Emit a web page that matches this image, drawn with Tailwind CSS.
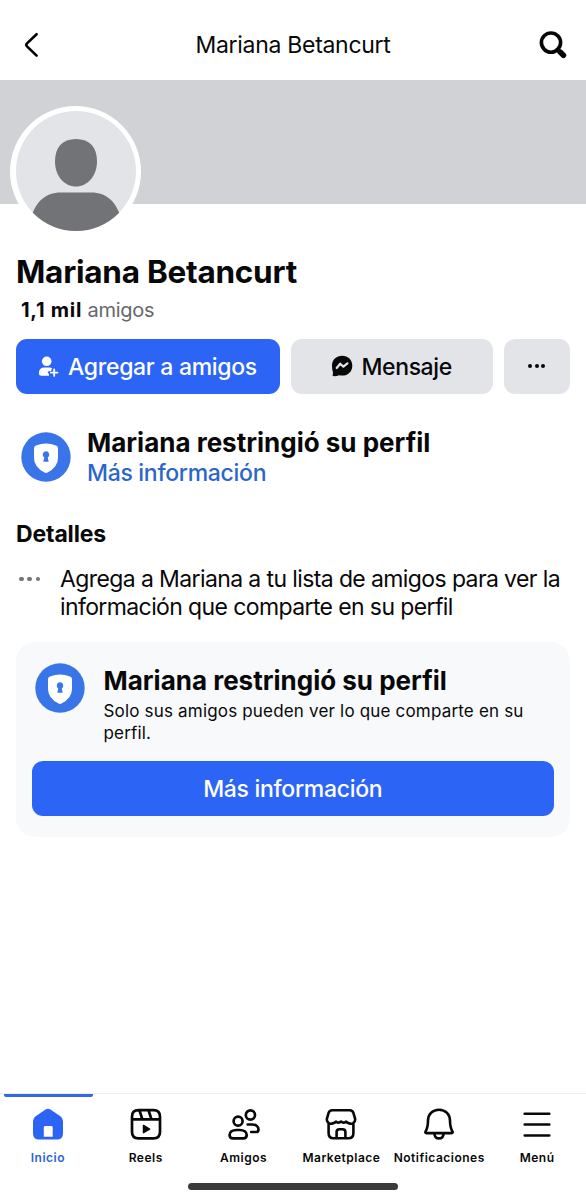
<!DOCTYPE html>
<html lang="es">
<head>
    <meta charset="UTF-8">
    <meta name="viewport" content="width=device-width, initial-scale=1.0">
    <title>Mariana Betancurt</title>
    <script src="https://cdn.jsdelivr.net/npm/@tailwindcss/browser@4"></script>
    <style>
        body { font-family: 'Inter', 'Liberation Sans', sans-serif; }
    </style>
</head>
<body class="bg-white text-[#080809] w-[586px] h-[1200px] flex flex-col overflow-hidden whitespace-nowrap">
    <!-- Header -->
    <header class="h-20 shrink-0 pt-[9px] flex items-center justify-between">
        <button class="w-[60px] pl-[22px]">
            <svg class="w-5 h-7" viewBox="0 0 20 28" fill="none" stroke="#000" stroke-width="2.6" stroke-linecap="round" stroke-linejoin="round"><path d="M14.6 3.2 5 12.4Q3.6 13.9 5 15.4L14.6 24.6"/></svg>
        </button>
        <h1 class="text-[23px] leading-7 tracking-[-0.3px]">Mariana Betancurt</h1>
        <button class="w-[60px] pl-[12px]">
            <svg class="w-8 h-8" viewBox="0 0 32 32" fill="none" stroke="#050505" stroke-linecap="round"><circle cx="13" cy="13.600" r="9.600" stroke-width="3.600"/><path d="m22.200 23.100 3.200 3.100" stroke-width="5.600"/><path d="m19.500 20.500 3 3" stroke-width="4"/></svg>
        </button>
    </header>

    <!-- Cover and avatar -->
    <div class="h-[124px] shrink-0 bg-[#d1d2d6] pt-[25.500px] pl-[10.400px]">
        <div class="w-[131px] h-[131px] rounded-full bg-white p-[5.500px]">
            <svg class="w-[120px] h-[120px]" viewBox="0 0 120 120">
                <clipPath id="avatar"><circle cx="60" cy="60" r="60"/></clipPath>
                <g clip-path="url(#avatar)">
                    <path fill="#e3e4e8" d="M0 0h120v120H0z"/>
                    <path fill="#727377" d="M60 28c14 0 21 8.500 21 22.500C81 65 71.500 75.500 60 75.500S39 65 39 50.500C39 36.500 46 28 60 28ZM45 81.500h30c16 0 26 10 30 26V120H15v-12.500c4-16 14-26 30-26Z"/>
                </g>
            </svg>
        </div>
    </div>

    <main class="flex-1 px-4 pt-[50px]">
        <h2 class="text-[31.500px] leading-9 font-bold tracking-[-0.250px]">Mariana Betancurt</h2>
        <p class="mt-[7px] ml-[5px] text-[20px] leading-[26px] tracking-[-0.300px] text-[#65686c]"><b class="font-bold tracking-[0.750px] text-[#080809]">1,1 mil</b> amigos</p>

        <div class="mt-4 flex gap-[11px] h-[54.500px] text-[23px] font-medium">
            <button class="w-[263.500px] rounded-[11px] bg-[#2c64f6] text-white flex items-center pl-[22px] gap-[9px]">
                <svg class="w-[21px] h-[22px]" viewBox="0 0 21 22" fill="#fff"><circle cx="8.700" cy="6.300" r="4.800"/><path d="M6.500 12.500h5.200q2.600 0 2.800 1.700h-1.200v2h-2.300q-1.200 0-1.200 1.200t1.200 1.200v2.200H3.300Q.9 20.800.9 18.400q0-5.900 5.600-5.900Z"/><path d="M16.200 14.300v6.600M12.900 17.600h6.600" stroke="#fff" stroke-width="1.800" stroke-linecap="round"/></svg>
                <span class="pt-[2px] tracking-[-0.300px]">Agregar a amigos</span>
            </button>
            <button class="w-[202.500px] rounded-[11px] bg-[#e3e4e8] flex items-center pl-[40px] gap-[9px]">
                <svg class="w-[22px] h-[22px]" viewBox="0 0 22 22"><path fill="#080809" d="M11.200.8C17.200.8 21.300 5 21.300 10.700S17.200 20.600 11.200 20.600q-1.700 0-3.200-.4-2.500 1.100-5.600.9-1.400-.2-.7-1.400.7-1.300.1-3Q1 14.300 1 10.700C1 5 5.200.8 11.200.8Z"/><path d="m5.700 13 3.500-4.300 3.200 2.900 4-3.300" fill="none" stroke="#e3e4e8" stroke-width="2.200" stroke-linecap="round" stroke-linejoin="round"/></svg>
                <span class="pt-[2px] tracking-[-0.400px]">Mensaje</span>
            </button>
            <button class="w-[65.500px] rounded-[11px] bg-[#e3e4e8] flex items-center justify-center gap-[2.800px]">
                <i class="size-[3.700px] rounded-full bg-[#080809]"></i>
                <i class="size-[3.700px] rounded-full bg-[#080809]"></i>
                <i class="size-[3.700px] rounded-full bg-[#080809]"></i>
            </button>
        </div>

        <!-- Locked profile notice -->
        <div class="mt-[34.500px] pl-[5px] flex gap-4">
            <svg class="mt-[4px] size-[50px]" viewBox="0 0 50 50"><circle cx="25" cy="25" r="24.700" fill="#3975e9"/><path fill="#fff" d="M15 13.500Q25 9.700 35 13.500q2 .6 2 2.500v10q0 9-10.500 14.600-1.500.8-3 0Q13 35 13 26V16q0-1.900 2-2.500Z"/><path fill="#3975e9" d="M25 19.300a3.300 3.300 0 0 1 1.700 6.100l1 4.400H22.300l1-4.400A3.300 3.300 0 0 1 25 19.300Z"/></svg>
            <div>
                <h3 class="text-[26px] leading-[30px] font-bold">Mariana restringió su perfil</h3>
                <a class="block text-[23px] leading-[30px] font-medium tracking-[-0.300px] text-[#2b66c9]">Más información</a>
            </div>
        </div>

        <h3 class="mt-8 text-[23px] leading-7 font-bold tracking-[-0.150px]">Detalles</h3>
        <div class="mt-[17px] flex">
            <div class="w-11 h-7 shrink-0 pl-[3px] flex items-center gap-[3.500px]">
                <i class="size-[4.800px] rounded-full bg-[#737478]"></i>
                <i class="size-[4.800px] rounded-full bg-[#737478]"></i>
                <i class="size-[4.800px] rounded-full bg-[#737478]"></i>
            </div>
            <p class="pt-px text-[23px] leading-[27.500px] tracking-[-0.610px]">Agrega a Mariana a tu lista de amigos para ver la<br>información que comparte en su perfil</p>
        </div>

        <!-- Locked profile card -->
        <section class="mt-[21px] h-[195px] w-[553.500px] rounded-[19px] bg-[#f7f9fb] p-4 pt-[21px]">
            <div class="pl-[2.500px] flex gap-[19px]">
                <svg class="size-[50px]" viewBox="0 0 50 50"><circle cx="25" cy="25" r="24.700" fill="#3975e9"/><path fill="#fff" d="M15 13.500Q25 9.700 35 13.500q2 .6 2 2.500v10q0 9-10.500 14.600-1.500.8-3 0Q13 35 13 26V16q0-1.900 2-2.500Z"/><path fill="#3975e9" d="M25 19.300a3.300 3.300 0 0 1 1.700 6.100l1 4.400H22.300l1-4.400A3.300 3.300 0 0 1 25 19.300Z"/></svg>
                <div class="pt-[3px]">
                    <h3 class="text-[26px] leading-[30px] font-bold">Mariana restringió su perfil</h3>
                    <p class="mt-[5px] text-[17px] leading-[21.500px] tracking-[0.180px]">Solo sus amigos pueden ver lo que comparte en su<br>perfil.</p>
                </div>
            </div>
            <button class="mt-[17px] pt-px w-full h-[54.500px] rounded-[11px] bg-[#2c64f6] text-white text-[23px] font-medium tracking-[-0.300px]">Más información</button>
        </section>
    </main>

    <!-- Bottom tabs -->
    <nav class="h-[107px] w-full shrink-0 border-t border-[#ececee] flex flex-col">
        <div class="w-[587px] -ml-px grid grid-cols-6 text-center text-[12px] leading-4 font-semibold tracking-[0.500px]">
            <a class="flex flex-col items-center text-[#2b63e0]">
                <span class="w-[89px] h-[3px] ml-[1.500px] rounded-b-[2px] bg-[#3566e3]"></span>
                <svg class="mt-[11px] size-8" viewBox="0 0 32 32"><path fill="#2c64f6" fill-rule="evenodd" d="M13.200 1.700q2.800-1.800 5.600 0l9.600 6.500Q31 10 31 13v12.500q0 6-6 6H7q-6 0-6-6V13q0-3 2.600-4.800Zm-.1 16.300q-1.300 0-1.300 1.300v9.400h8.900v-9.400q0-1.300-1.300-1.300Z"/></svg>
                <span class="mt-[10px]">Inicio</span>
            </a>
            <a class="flex flex-col items-center pt-[14px]">
                <svg class="size-8" viewBox="0 0 32 32" fill="none" stroke="#080809" stroke-width="2.700"><path d="M8.500 2.200h15q6.500 0 6.500 6.500v15q0 6.600-6.500 6.600h-15Q2 30.300 2 23.700v-15q0-6.500 6.500-6.500ZM2 11.300h28M9.500 2.500l2.800 8.600M18.600 2.500l2.800 8.600"/><path fill="#080809" stroke-width="1.500" stroke-linejoin="round" d="m13.500 17.500 6.100 3.600-6.100 3.600Z"/></svg>
                <span class="mt-[10px]">Reels</span>
            </a>
            <a class="flex flex-col items-center pt-[14px]">
                <svg class="size-8" viewBox="0 0 32 32" fill="none" stroke="#080809" stroke-width="2.700" stroke-linecap="round"><circle cx="10.100" cy="13.200" r="4.500"/><circle cx="22.400" cy="7" r="4.600"/><path d="M8.500 22h3.200c4.200 0 7 2.200 7 5 0 2-1.200 3.400-3.400 3.400H5c-2.200 0-3.400-1.400-3.400-3.400 0-2.800 2.700-5 6.900-5ZM19.700 16.500h4.300c4.200 0 6.500 2.400 6.500 4.900 0 1.500-1 2.600-2.600 2.600h-4.700"/></svg>
                <span class="mt-[10px]">Amigos</span>
            </a>
            <a class="flex flex-col items-center pt-[14px]">
                <svg class="size-8" viewBox="0 0 32 32" fill="none" stroke="#080809" stroke-width="2.600" stroke-linejoin="round"><path d="M7.200 2.200h17.600q2.800 0 3.600 2.600l1.800 6.400a4.300 4.300 0 0 1-6.100 4.100q-1.600-.5-3.200-1.700-2.400 2.200-4.900 0-2.500 2.200-4.900 0-1.600 1.200-3.200 1.700a4.300 4.300 0 0 1-6.100-4.100l1.800-6.400q.8-2.600 3.600-2.600ZM3.600 14.500v10.800q0 5 5 5h14.800q5 0 5-5V14.500"/><path d="M11.600 30V24q0-2.800 2.800-2.800h3.200q2.800 0 2.800 2.800v6"/></svg>
                <span class="mt-[10px]">Marketplace</span>
            </a>
            <a class="flex flex-col items-center pt-[14px]">
                <svg class="size-8" viewBox="0 0 32 32" fill="none" stroke="#080809" stroke-width="2.600" stroke-linejoin="round"><path d="M16 1.700c6.700 0 11 4.700 11 10.900 0 5.400.8 8.300 2.500 11 .5.900.1 1.500-.9 1.500H3.400c-1 0-1.400-.6-.9-1.500 1.700-2.700 2.500-5.600 2.500-11C5 6.400 9.300 1.700 16 1.700ZM11.300 25.300c.3 3.200 2 5.100 4.700 5.100s4.400-1.900 4.700-5.100"/></svg>
                <span class="mt-[10px]">Notificaciones</span>
            </a>
            <a class="flex flex-col items-center pt-[14px]">
                <svg class="size-8" viewBox="0 0 32 32" stroke="#080809" stroke-width="2.600" stroke-linecap="round"><path d="M3.700 5.700h24.600M3.700 16.500h24.600M3.700 27.500h24.600"/></svg>
                <span class="mt-[10px]">Menú</span>
            </a>
        </div>
        <div class="mt-[17px] ml-[188px] w-[210px] h-[6.500px] shrink-0 rounded-full bg-[#3b3b3b]"></div>
    </nav>
</body>
</html>
